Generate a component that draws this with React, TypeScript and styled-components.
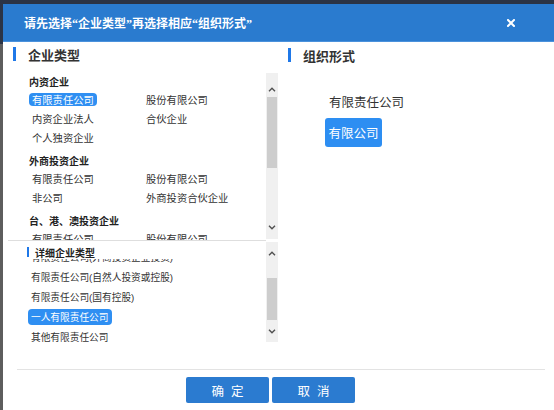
import React, { useLayoutEffect, useRef } from "react";
import styled, { createGlobalStyle } from "styled-components";

const Global = createGlobalStyle`
  html, body { margin: 0; padding: 0; }
  body {
    background: linear-gradient(#2b3446 0 44px, #5d5d5d 44px);
    font-family: "Noto Sans CJK SC", "Noto Sans", sans-serif;
    overflow: hidden;
  }
`;

const Page = styled.div`
  width: 554px;
  height: 410px;
  padding: 4px 0 0 3px;
  box-sizing: border-box;
`;

const Dialog = styled.div`
  width: 551px;
  height: 406px;
  background: #fff;
  display: flex;
  flex-direction: column;
`;

const Header = styled.div`
  height: 38px;
  flex: none;
  background: #2a7bcf;
  display: flex;
  align-items: center;
  justify-content: space-between;
  padding: 0 39px 0 21px;
  color: #fff;
  box-shadow: inset 0 -1px 0 #4b92dc;
`;

const Title = styled.div`
  font-family: "Liberation Serif", "Noto Sans CJK SC", serif;
  font-size: 12px;
  font-weight: 700;
`;

const Main = styled.div`
  height: 327px;
  flex: none;
  display: grid;
  grid-template-columns: 270px 1fr;
  padding-left: 5px;
`;

const Column = styled.div`
  display: flex;
  flex-direction: column;
  min-width: 0;
`;

const Heading = styled.div<{ $top: number; $left: number; $bottom: number }>`
  display: flex;
  align-items: center;
  height: 14px;
  margin: ${(p) => p.$top}px 0 ${(p) => p.$bottom}px ${(p) => p.$left}px;
  font-size: 13px;
  font-weight: 700;
  color: #333;
  &::before {
    content: "";
    width: 3px;
    height: 14px;
    background: #1f78e8;
    margin-right: 12px;
  }
`;

const ListBox = styled.div`
  display: flex;
  height: 168px;
`;

const ListViewport = styled.div`
  flex: 1;
  overflow: hidden;
  padding: 2px 0 0 21px;
`;

const Group = styled.div`
  & + & {
    margin-top: 6px;
  }
`;

const GroupTitle = styled.div`
  height: 16px;
  line-height: 16px;
  font-size: 10px;
  font-weight: 700;
  color: #222;
`;

const ItemGrid = styled.div`
  display: grid;
  grid-template-columns: 114px 1fr;
  grid-auto-rows: 19px;
  align-items: center;
`;

const Item = styled.span<{ $active?: boolean }>`
  justify-self: start;
  display: inline-flex;
  align-items: center;
  height: ${(p) => (p.$active ? 13 : 16)}px;
  padding: 0 3px;
  border-radius: 4px;
  font-size: 10.3px;
  white-space: nowrap;
  color: ${(p) => (p.$active ? "#fff" : "#333")};
  background: ${(p) => (p.$active ? "#2f8ff2" : "transparent")};
`;

const ScrollTrack = styled.div<{ $top: number; $height: number }>`
  width: 12px;
  flex: none;
  margin-top: ${(p) => p.$top}px;
  height: ${(p) => p.$height}px;
  background: #f0f0f0;
  display: flex;
  flex-direction: column;
`;

const ArrowBox = styled.div<{ $h: number; $align: string }>`
  height: ${(p) => p.$h}px;
  flex: none;
  display: flex;
  justify-content: center;
  align-items: ${(p) => p.$align};
  padding: 5px 0;
  box-sizing: border-box;
`;

const Thumb = styled.div<{ $offset: number; $size: number }>`
  margin: ${(p) => p.$offset}px 1px 0 1px;
  height: ${(p) => p.$size}px;
  background: #cdcdcd;
  flex: none;
`;

const Spacer = styled.div`
  flex: 1;
`;

const Chevron = ({ up }: { up?: boolean }) => (
  <svg width="8" height="5" viewBox="0 0 8 5">
    <path
      d={up ? "M1 4.2 L4 1.2 L7 4.2" : "M1 0.8 L4 3.8 L7 0.8"}
      fill="none"
      stroke="#505050"
      strokeWidth="1.4"
    />
  </svg>
);

const Scrollbar = ({
  top,
  height,
  upH,
  downH,
  upAlign,
  downAlign,
  thumbOffset,
  thumbSize,
}: {
  top: number;
  height: number;
  upH: number;
  downH: number;
  upAlign: string;
  downAlign: string;
  thumbOffset: number;
  thumbSize: number;
}) => (
  <ScrollTrack $top={top} $height={height}>
    <ArrowBox $h={upH} $align={upAlign}>
      <Chevron up />
    </ArrowBox>
    <Thumb $offset={thumbOffset} $size={thumbSize} />
    <Spacer />
    <ArrowBox $h={downH} $align={downAlign}>
      <Chevron />
    </ArrowBox>
  </ScrollTrack>
);

const DetailSection = styled.div`
  display: flex;
  height: 105px;
`;

const DetailLeft = styled.div`
  flex: 1;
  border-top: 1px solid #dedede;
  display: flex;
  flex-direction: column;
  min-width: 0;
`;

const SubHeading = styled.div`
  display: flex;
  align-items: center;
  height: 10px;
  margin: 6px 0 2px 19px;
  font-size: 10px;
  font-weight: 700;
  color: #222;
  &::before {
    content: "";
    width: 2px;
    height: 10px;
    background: #1f78e8;
    margin-right: 6px;
  }
`;

const DetailViewport = styled.div`
  flex: 1;
  overflow: hidden;
  padding-left: 20px;
`;

const DetailRow = styled.div`
  height: 20px;
  display: flex;
  align-items: center;
`;

const DetailItem = styled.span<{ $active?: boolean }>`
  display: inline-flex;
  align-items: center;
  height: 16px;
  padding: 0 3px;
  border-radius: 4px;
  font-family: "Liberation Sans", "Noto Sans CJK SC", sans-serif;
  font-size: 9.7px;
  white-space: nowrap;
  color: ${(p) => (p.$active ? "#fff" : "#333")};
  background: ${(p) => (p.$active ? "#2f8ff2" : "transparent")};
`;

const FormArea = styled.div`
  display: flex;
  flex-direction: column;
  align-items: flex-start;
  padding-left: 47px;
  margin-top: 32px;
`;

const FormTitle = styled.div`
  height: 16px;
  line-height: 16px;
  margin-left: 4px;
  font-size: 12.5px;
  color: #333;
`;

const FormOption = styled.div<{ $active?: boolean }>`
  margin-top: 8px;
  height: 29px;
  padding: 0 3.5px;
  display: flex;
  align-items: center;
  border-radius: 3px;
  font-size: 12.5px;
  color: ${(p) => (p.$active ? "#fff" : "#333")};
  background: ${(p) => (p.$active ? "#2d8ef2" : "transparent")};
`;

const Footer = styled.div`
  margin: 0 9px 0 14px;
  border-top: 1px solid #e3e3e3;
  display: flex;
  justify-content: center;
  gap: 3px;
  padding: 7px 21px 0 0;
`;

const Button = styled.button`
  width: 83px;
  height: 26px;
  border: none;
  border-radius: 2px;
  background: #2b7bd0;
  color: #fff;
  font-family: "Noto Sans CJK SC", sans-serif;
  font-size: 12.5px;
  letter-spacing: 7px;
  text-indent: 7px;
  padding: 0;
`;

const CloseIcon = () => (
  <svg width="8" height="8" viewBox="0 0 8 8">
    <path d="M1 1 L7 7 M7 1 L1 7" stroke="#fff" strokeWidth="2" strokeLinecap="square" />
  </svg>
);

const groups = [
  {
    title: "内资企业",
    items: ["有限责任公司", "股份有限公司", "内资企业法人", "合伙企业", "个人独资企业"],
    active: 0,
  },
  {
    title: "外商投资企业",
    items: ["有限责任公司", "股份有限公司", "非公司", "外商投资合伙企业"],
    active: -1,
  },
  {
    title: "台、港、澳投资企业",
    items: ["有限责任公司", "股份有限公司", "非公司", "合伙企业"],
    active: -1,
  },
];

const details = [
  "有限责任公司(外商投资企业投资)",
  "有限责任公司(自然人投资或控股)",
  "有限责任公司(国有控股)",
  "一人有限责任公司",
  "其他有限责任公司",
  "有限责任公司(国有独资)",
];

export default function App() {
  const detailRef = useRef<HTMLDivElement>(null);
  useLayoutEffect(() => {
    if (detailRef.current) detailRef.current.scrollTop = 12;
  }, []);

  return (
    <>
      <Global />
      <Page>
        <Dialog>
          <Header>
            <Title>请先选择“企业类型”再选择相应“组织形式”</Title>
            <CloseIcon />
          </Header>
          <Main>
            <Column>
              <Heading $top={5} $left={5} $bottom={11}>
                企业类型
              </Heading>
              <ListBox>
                <ListViewport>
                  {groups.map((g) => (
                    <Group key={g.title}>
                      <GroupTitle>{g.title}</GroupTitle>
                      <ItemGrid>
                        {g.items.map((it, i) => (
                          <Item key={i} $active={i === g.active}>
                            {it}
                          </Item>
                        ))}
                      </ItemGrid>
                    </Group>
                  ))}
                </ListViewport>
                <Scrollbar
                  top={1}
                  height={166}
                  upH={24}
                  downH={24}
                  upAlign="flex-end"
                  downAlign="center"
                  thumbOffset={0}
                  thumbSize={71}
                />
              </ListBox>
              <DetailSection>
                <DetailLeft>
                  <SubHeading>详细企业类型</SubHeading>
                  <DetailViewport ref={detailRef}>
                    {details.map((d, i) => (
                      <DetailRow key={i}>
                        <DetailItem $active={i === 3}>{d}</DetailItem>
                      </DetailRow>
                    ))}
                  </DetailViewport>
                </DetailLeft>
                <Scrollbar
                  top={2}
                  height={100}
                  upH={22}
                  downH={22}
                  upAlign="center"
                  downAlign="center"
                  thumbOffset={14}
                  thumbSize={42}
                />
              </DetailSection>
            </Column>
            <Column>
              <Heading $top={6} $left={10} $bottom={0}>
                组织形式
              </Heading>
              <FormArea>
                <FormTitle>有限责任公司</FormTitle>
                <FormOption $active>有限公司</FormOption>
              </FormArea>
            </Column>
          </Main>
          <Footer>
            <Button>确定</Button>
            <Button>取消</Button>
          </Footer>
        </Dialog>
      </Page>
    </>
  );
}
